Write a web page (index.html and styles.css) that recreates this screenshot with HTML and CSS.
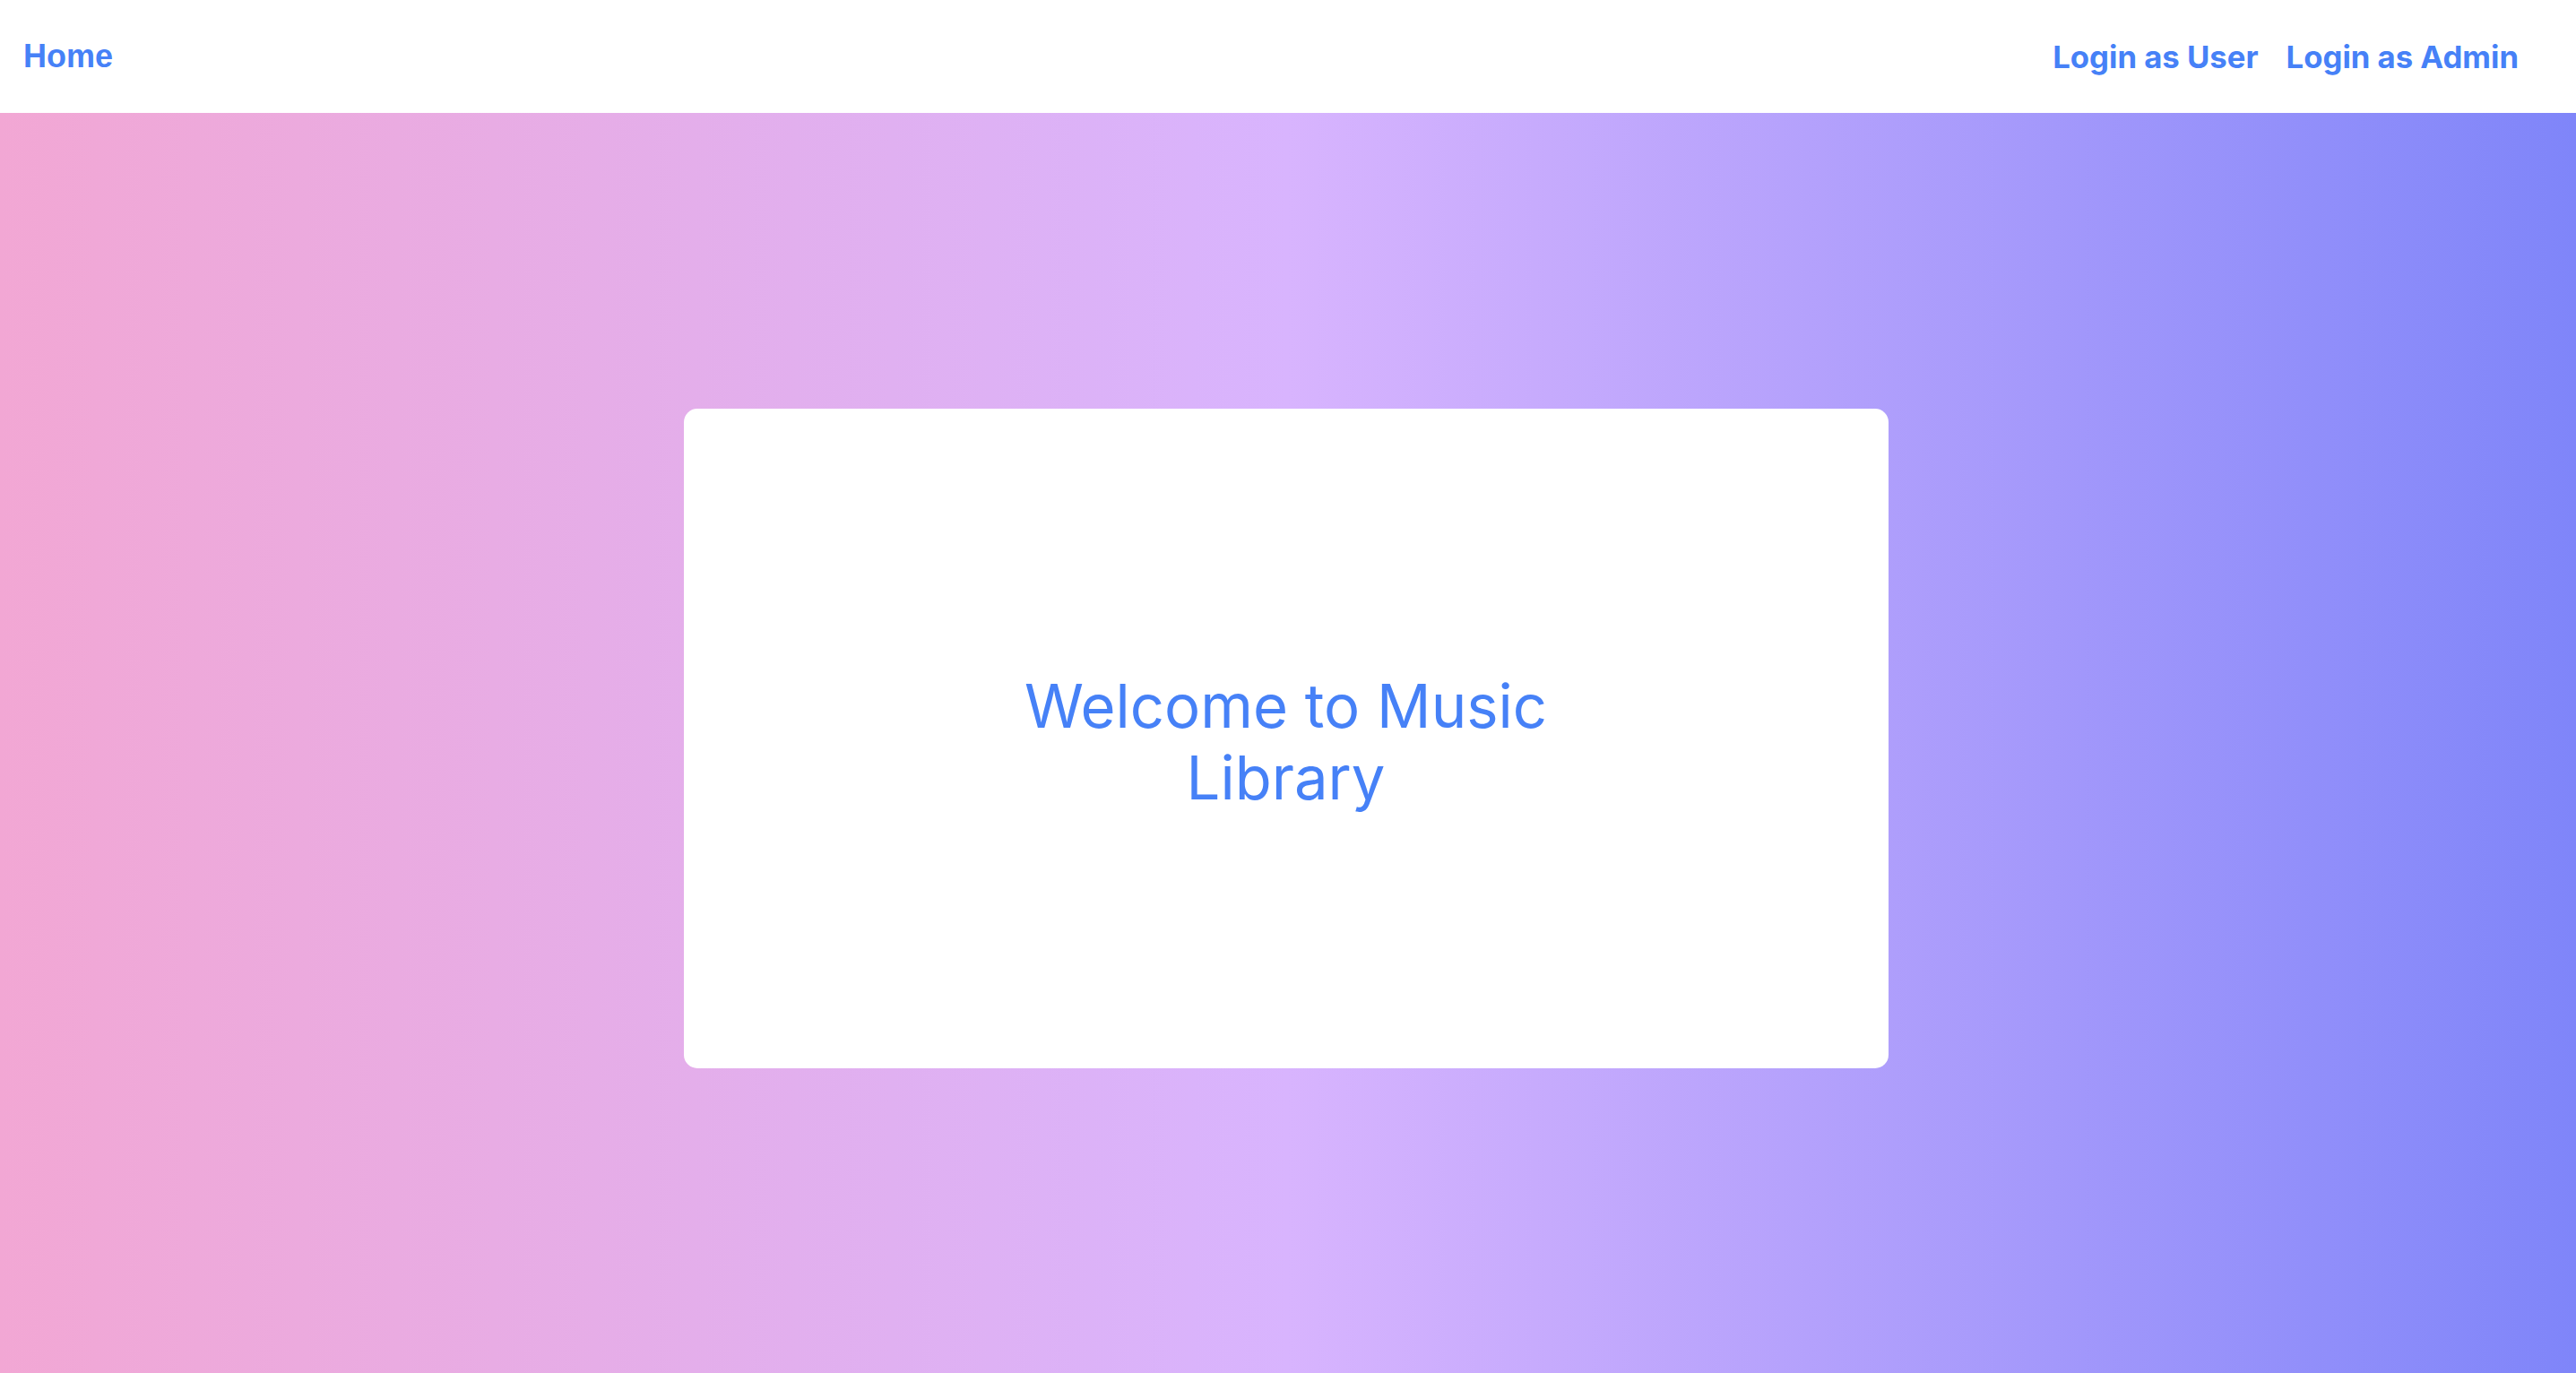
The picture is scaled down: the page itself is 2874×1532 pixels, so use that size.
FILE: index.html
```html
<!DOCTYPE html>
<html lang="en">
<head>
<meta charset="utf-8">
<title>Music Library</title>
<link rel="stylesheet" href="styles.css">
</head>
<body>
<nav class="navbar">
  <a class="nav-home" href="#">Home</a>
  <div class="nav-links">
    <a class="nav-link" href="#">Login as User</a>
    <a class="nav-link" href="#">Login as Admin</a>
  </div>
</nav>
<main class="hero">
  <section class="card">
    <h1 class="title">Welcome to Music Library</h1>
  </section>
</main>
</body>
</html>
```
FILE: styles.css
```css
html, body {
  margin: 0;
  padding: 0;
  height: 100%;
}
body {
  display: flex;
  flex-direction: column;
  font-family: Inter, "Noto Sans", sans-serif;
  background: #ffffff;
}
.navbar {
  height: 126px;
  flex: 0 0 126px;
  display: flex;
  align-items: center;
  justify-content: space-between;
  padding: 0 64px 0 26px;
  background: #ffffff;
}
.nav-home {
  font-family: "Liberation Sans", Arial, sans-serif;
  font-weight: 700;
  font-size: 36px;
  color: #4681f7;
  text-decoration: none;
}
.nav-links {
  display: flex;
  gap: 31px;
}
.nav-link {
  font-family: Inter, sans-serif;
  font-weight: 700;
  font-size: 34.7px;
  color: #4681f7;
  text-decoration: none;
}
.hero {
  flex: 1;
  display: flex;
  align-items: center;
  justify-content: center;
  padding: 0 5px 11px 0;
  background: linear-gradient(to right, #f2a7d4 0%, #d8b4fe 50%, #7f85f9 100%);
}
.card {
  width: 1344px;
  height: 736px;
  background: #ffffff;
  border-radius: 15px;
  display: flex;
  align-items: center;
  justify-content: center;
}
.title {
  margin: 0;
  padding-top: 8px;
  max-width: 620px;
  text-align: center;
  font-family: Inter, sans-serif;
  font-weight: 400;
  font-size: 67px;
  line-height: 80px;
  color: #4681f7;
}
```
